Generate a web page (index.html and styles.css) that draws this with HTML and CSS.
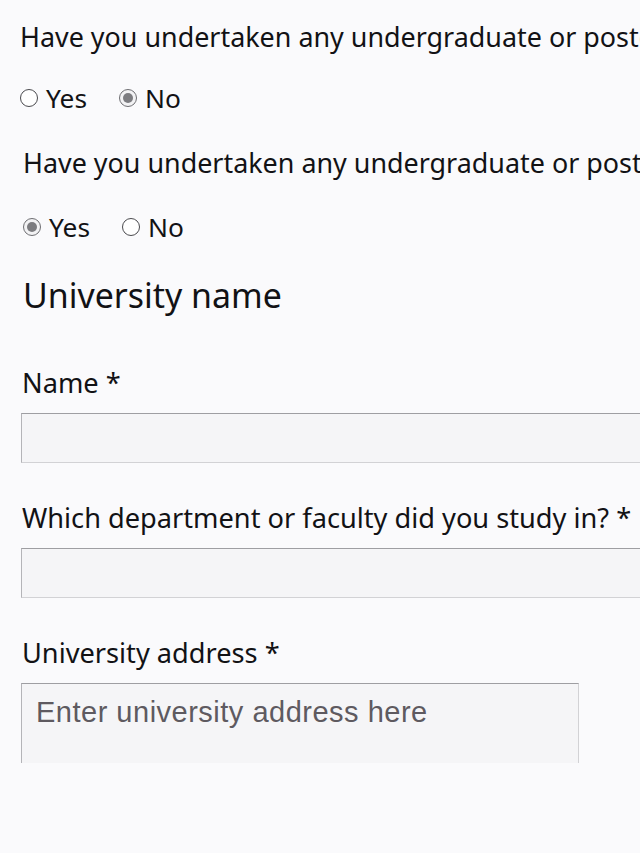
FILE: index.html
```html
<!DOCTYPE html>
<html lang="en">
<head>
<meta charset="utf-8">
<title>University details</title>
<link rel="stylesheet" href="styles.css">
</head>
<body>
<main class="page">
  <section class="question">
    <p class="q-text">Have you undertaken any undergraduate or postgraduate study?</p>
    <div class="radios">
      <label class="radio"><span class="dot"></span>Yes</label>
      <label class="radio"><span class="dot dot-on"></span>No</label>
    </div>
  </section>
  <section class="question question-b">
    <p class="q-text">Have you undertaken any undergraduate or postgraduate study?</p>
    <div class="radios">
      <label class="radio"><span class="dot dot-on"></span>Yes</label>
      <label class="radio"><span class="dot"></span>No</label>
    </div>
  </section>
  <section class="uni question-b">
    <h2 class="heading">University name</h2>
    <div class="field field-first">
      <label class="f-label">Name *</label>
      <div class="input"></div>
    </div>
    <div class="field">
      <label class="f-label">Which department or faculty did you study in? *</label>
      <div class="input"></div>
    </div>
    <div class="field">
      <label class="f-label">University address *</label>
      <div class="area-clip">
        <div class="area"><span class="placeholder">Enter university address here</span></div>
      </div>
    </div>
  </section>
</main>
</body>
</html>
```

FILE: styles.css
```css
html, body {
  margin: 0;
  padding: 0;
  background: #fafafc;
  overflow: hidden;
}
body {
  width: 640px;
  height: 853px;
  font-family: "Noto Sans", Lato, sans-serif;
  color: #121215;
}
.page {
  padding: 17px 0 0 20px;
}
.question-b {
  padding-left: 3px;
}
.q-text {
  margin: 0;
  font-size: 26.9px;
  line-height: 40px;
  white-space: nowrap;
}
.radios {
  display: flex;
  gap: 32px;
  margin-top: 21px;
  font-size: 26.3px;
  line-height: 40px;
}
.question-b .q-text {
  margin-top: 25px;
}
.question-b .radios {
  margin-top: 24px;
}
.radio {
  display: flex;
  align-items: center;
  gap: 8px;
}
.dot {
  box-sizing: border-box;
  width: 18px;
  height: 18px;
  border-radius: 50%;
  border: 1px solid #4a4a4e;
  background: #ffffff;
  position: relative;
}
.dot-on {
  border-color: #6e6e72;
  background: #f2f2f4;
}
.dot-on::after {
  content: "";
  position: absolute;
  left: 3px;
  top: 3px;
  width: 10px;
  height: 10px;
  border-radius: 50%;
  background: #7c7c80;
}
.heading {
  margin: 26px 0 0;
  font-size: 33.9px;
  font-weight: 400;
  line-height: 44px;
}
.field {
  margin-top: 37px;
}
.field-first {
  margin-top: 48px;
}
.f-label {
  display: block;
  font-size: 27.2px;
  line-height: 36px;
  margin-bottom: 12px;
  margin-left: -1px;
  white-space: nowrap;
}
.input {
  box-sizing: border-box;
  width: 660px;
  height: 50px;
  margin-left: -2px;
  background: #f5f5f7;
  border: 1px solid #d2d2d5;
  border-top-color: #9e9ea2;
  border-left-color: #b4b4b8;
}
.area-clip {
  margin-left: -2px;
  margin-top: 13px;
  height: 80px;
  overflow: hidden;
}
.field .f-label + .area-clip {
  margin-top: 0;
}
.area {
  box-sizing: border-box;
  width: 558px;
  height: 130px;
  padding: 10px 14px;
  background: #f5f5f7;
  border: 1px solid #d2d2d5;
  border-top-color: #9e9ea2;
  border-left-color: #b4b4b8;
}
.placeholder {
  font-family: "Liberation Sans", Arial, sans-serif;
  font-size: 29px;
  line-height: 36px;
  letter-spacing: 0.5px;
  color: #5e5a60;
}
```
